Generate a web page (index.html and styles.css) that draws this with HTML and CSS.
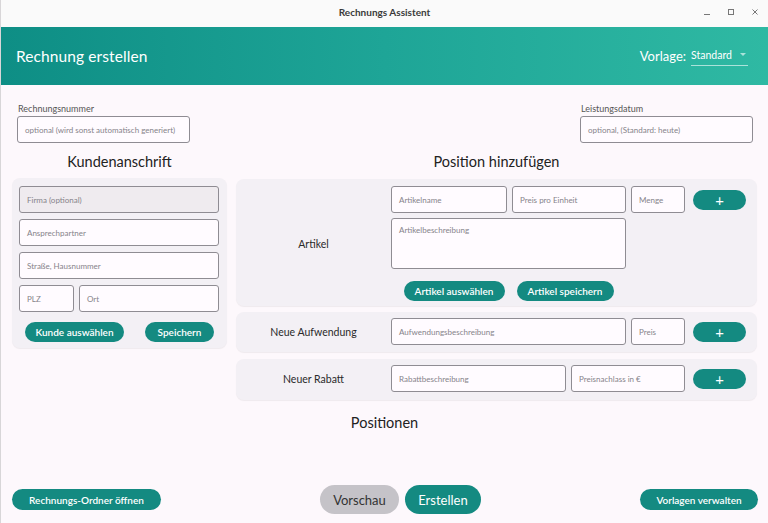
FILE: index.html
```html
<!DOCTYPE html>
<html lang="de">
<head>
<meta charset="utf-8">
<title>Rechnungs Assistent</title>
<link rel="stylesheet" href="styles.css">
</head>
<body>
<div class="window">
  <div class="titlebar">
    <span class="title">Rechnungs Assistent</span>
    <div class="controls">
      <svg class="ctl" width="10" height="10" viewBox="0 0 10 10"><line x1="2" y1="7.5" x2="8" y2="7.5" stroke="#777" stroke-width="1"/></svg>
      <svg class="ctl" width="10" height="10" viewBox="0 0 10 10"><rect x="2.5" y="2.5" width="5" height="5" fill="none" stroke="#777" stroke-width="1"/></svg>
      <svg class="ctl" width="10" height="10" viewBox="0 0 10 10"><path d="M2.5 2.5 L7.5 7.5 M7.5 2.5 L2.5 7.5" stroke="#777" stroke-width="1"/></svg>
    </div>
  </div>
  <header class="appbar">
    <h1 class="apptitle">Rechnung erstellen</h1>
    <div class="template">
      <span class="template-label">Vorlage:</span>
      <span class="select">Standard<span class="caret"></span></span>
    </div>
  </header>
  <main class="content">
    <div class="toprow">
      <label class="field field-num">
        <span class="field-label">Rechnungsnummer</span>
        <span class="input">optional (wird sonst automatisch generiert)</span>
      </label>
      <label class="field field-date">
        <span class="field-label">Leistungsdatum</span>
        <span class="input">optional, (Standard: heute)</span>
      </label>
    </div>
    <div class="columns">
      <section class="col-left">
        <h2 class="section-title">Kundenanschrift</h2>
        <div class="card customer">
          <span class="input filled">Firma (optional)</span>
          <span class="input">Ansprechpartner</span>
          <span class="input">Straße, Hausnummer</span>
          <div class="plzrow">
            <span class="input plz">PLZ</span>
            <span class="input ort">Ort</span>
          </div>
          <div class="customer-actions">
            <button class="btn w-kunde">Kunde auswählen</button>
            <button class="btn w-speichern">Speichern</button>
          </div>
        </div>
      </section>
      <section class="col-right">
        <h2 class="section-title">Position hinzufügen</h2>
        <div class="card poscard artikel">
          <div class="poslabel">Artikel</div>
          <div class="posbody">
            <div class="posrow">
              <span class="input w-name">Artikelname</span>
              <span class="input w-preis">Preis pro Einheit</span>
              <span class="input w-menge">Menge</span>
              <button class="btn plus">+</button>
            </div>
            <span class="input textarea">Artikelbeschreibung</span>
            <div class="artikel-actions">
              <button class="btn w-auswaehlen">Artikel auswählen</button>
              <button class="btn w-aspeichern">Artikel speichern</button>
            </div>
          </div>
        </div>
        <div class="card poscard aufwendung">
          <div class="poslabel">Neue Aufwendung</div>
          <div class="posrow">
            <span class="input w-aufw">Aufwendungsbeschreibung</span>
            <span class="input w-menge">Preis</span>
            <button class="btn plus">+</button>
          </div>
        </div>
        <div class="card poscard rabatt">
          <div class="poslabel">Neuer Rabatt</div>
          <div class="posrow">
            <span class="input w-rabatt">Rabattbeschreibung</span>
            <span class="input w-nachlass">Preisnachlass in €</span>
            <button class="btn plus">+</button>
          </div>
        </div>
      </section>
    </div>
    <h2 class="positions-title">Positionen</h2>
  </main>
  <footer class="bottombar">
    <button class="btn w-ordner">Rechnungs-Ordner öffnen</button>
    <div class="center-actions">
      <button class="btn big grey">Vorschau</button>
      <button class="btn big">Erstellen</button>
    </div>
    <button class="btn w-vorlagen">Vorlagen verwalten</button>
  </footer>
</div>
</body>
</html>
```

FILE: styles.css
```css
* { box-sizing: border-box; }
html, body { margin: 0; padding: 0; }
body {
  font-family: Lato, "Noto Sans", sans-serif;
  background: #fdf8fc;
  color: #1d1b20;
}
.window {
  width: 768px;
  height: 523px;
  display: flex;
  flex-direction: column;
  border-left: 1px solid #d8d6d8;
  overflow: hidden;
}
.titlebar {
  height: 27px;
  flex: 0 0 27px;
  background: #fafafa;
  display: flex;
  align-items: center;
  justify-content: center;
  position: relative;
}
.title {
  font-size: 10px;
  font-weight: 700;
  color: #3a3a3a;
  margin-top: -3px;
}
.controls {
  position: absolute;
  right: 8px;
  top: 7px;
  display: flex;
  gap: 14px;
}
.ctl { display: block; }
.appbar {
  height: 58px;
  flex: 0 0 58px;
  background: linear-gradient(90deg, #0e8e85 0%, #1ea597 50%, #2fb9a3 100%);
  display: flex;
  align-items: center;
  justify-content: space-between;
  padding: 0 20px 0 15px;
  color: #fff;
}
.apptitle {
  margin: 0;
  font-size: 15.5px;
  font-weight: 400;
  letter-spacing: 0.1px;
}
.template {
  display: flex;
  align-items: center;
  gap: 5px;
}
.template-label { font-size: 13px; }
.select {
  font-size: 10.5px;
  border-bottom: 1px solid rgba(255,255,255,0.6);
  padding: 1px 0 4px;
  width: 57px;
  display: flex;
  align-items: center;
  justify-content: space-between;
  margin-top: 1px;
}
.caret {
  width: 0; height: 0;
  border-left: 3px solid transparent;
  border-right: 3px solid transparent;
  border-top: 3px solid rgba(255,255,255,0.6);
  margin-right: 2px;
}
.content {
  flex: 1;
  display: flex;
  flex-direction: column;
}
.toprow {
  display: flex;
  justify-content: space-between;
  padding: 18px 15px 0 16px;
}
.field { display: flex; flex-direction: column; }
.field-label {
  font-size: 9px;
  color: #555;
  padding-left: 1px;
  margin-bottom: 2px;
  line-height: 11px;
}
.input {
  display: flex;
  align-items: center;
  height: 27px;
  border: 1px solid #8f8c93;
  border-radius: 3px;
  background: #fffbff;
  font-size: 8px;
  color: #86838a;
  padding: 0 7px;
  white-space: nowrap;
  overflow: hidden;
}
.field-num .input { width: 173px; }
.field-date .input { width: 173px; }
.columns {
  display: flex;
  gap: 9px;
  padding: 0 11px 0 11px;
}
.col-left { width: 215px; display: flex; flex-direction: column; }
.col-right { width: 521px; display: flex; flex-direction: column; }
.section-title {
  margin: 0;
  font-size: 14.5px;
  font-weight: 400;
  text-align: center;
  height: 36px;
  line-height: 38px;
  color: #222;
}
.col-left .section-title { height: 35px; line-height: 37px; }
.card {
  background: #f3f0f5;
  border-radius: 8px;
  box-shadow: 0 1px 1px rgba(0,0,0,0.06);
}
.customer {
  display: flex;
  flex-direction: column;
  gap: 6px;
  padding: 8px 8px 6px 7px;
}
.filled { background: #efebef; }
.plzrow { display: flex; gap: 5px; }
.plz { width: 55px; }
.ort { flex: 1; }
.customer-actions {
  display: flex;
  justify-content: space-between;
  padding: 4px 5px 0 6px;
}
.btn {
  font-family: inherit;
  border: none;
  background: #148a81;
  color: #fff;
  border-radius: 11px;
  height: 20px;
  font-size: 10px;
  font-weight: 600;
  padding: 0;
  cursor: pointer;
}
.w-kunde { width: 99px; }
.w-speichern { width: 69px; }
.poscard {
  display: flex;
  align-items: flex-start;
  padding: 6px 11px 7px 0;
}
.aufwendung { margin-top: 6px; }
.rabatt { margin-top: 7px; padding-bottom: 8px; }
.poslabel {
  width: 155px;
  flex: 0 0 155px;
  text-align: center;
  font-size: 10.5px;
  color: #2a2a2a;
  align-self: center;
}
.artikel { padding: 7px 11px 5px 0; }
.posbody { display: flex; flex-direction: column; gap: 5px; }
.posrow { display: flex; gap: 5px; align-items: center; }
.w-name { width: 116px; }
.w-preis { width: 114px; }
.w-menge { width: 54px; }
.w-aufw { width: 235px; }
.w-rabatt { width: 175px; }
.w-nachlass { width: 114px; }
.plus {
  width: 53px;
  margin-left: 3px;
  font-size: 15px;
  font-weight: 400;
  line-height: 20px;
}
.textarea {
  width: 235px;
  height: 51px;
  align-items: flex-start;
  padding-top: 6px;
}
.artikel-actions {
  width: 235px;
  display: flex;
  justify-content: center;
  gap: 12px;
  padding-top: 7px;
}
.w-auswaehlen { width: 101px; }
.w-aspeichern { width: 97px; }
.positions-title {
  margin: 0;
  font-size: 14.5px;
  font-weight: 400;
  text-align: center;
  padding-top: 14px;
  color: #222;
}
.bottombar {
  display: flex;
  align-items: center;
  justify-content: space-between;
  padding: 0 10px 9px 11px;
}
.w-ordner { width: 149px; height: 21px; }
.w-vorlagen { width: 118px; height: 21px; }
.center-actions { display: flex; gap: 6px; }
.big {
  height: 29px;
  border-radius: 15px;
  font-size: 13px;
  font-weight: 400;
  width: 76px;
}
.grey { background: #c5c3c8; color: #333; width: 79px; }
```
